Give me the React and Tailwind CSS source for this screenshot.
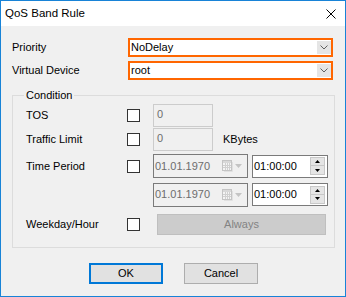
import React from "react";

function Chevron() {
  return (
    <svg width="8" height="5" viewBox="0 0 8 5" className="block">
      <path d="M0.5 0.5 L4 4 L7.5 0.5" fill="none" stroke="#606060" strokeWidth="1" />
    </svg>
  );
}

function Combo({ value }) {
  return (
    <div className="w-[205px] h-[19px] border-2 border-[#ff6600] bg-white flex items-center justify-between pl-[1px] pr-[0px]">
      <span className="leading-none">{value}</span>
      <div className="w-[14px] h-[13px] bg-[#e5e5e5] flex items-center justify-center">
        <Chevron />
      </div>
    </div>
  );
}

function Check() {
  return <div className="w-[13px] h-[13px] border border-[#333333] bg-white shrink-0" />;
}

function CalIcon() {
  return (
    <svg width="11" height="12" viewBox="0 0 11 12" className="block">
      <rect x="0.5" y="0.5" width="9" height="10" fill="#f4f4f4" stroke="#c4c4c4" />
      <rect x="1" y="1" width="8" height="2" fill="#d8d8d8" />
      <path d="M1 5.5 H9 M1 7.5 H9 M3.5 3 V10 M5.5 3 V10 M7.5 3 V10" stroke="#d0d0d0" strokeWidth="1" />
      <path d="M10.5 2 V11.5 H2" fill="none" stroke="#e0e0e0" />
    </svg>
  );
}

function DateBox() {
  return (
    <div className="w-[95px] h-[24px] border border-[#7a7a7a] bg-[#f0f0f0] flex items-center pl-[1px] pr-[5px] shrink-0">
      <span className="text-[#6d6d6d] leading-none">01.01.1970</span>
      <div className="ml-auto flex items-center gap-[2px]">
        <CalIcon />
        <svg width="7" height="4" viewBox="0 0 7 4" className="block">
          <path d="M0 0 H7 L3.5 4 Z" fill="#c4c4c4" />
        </svg>
      </div>
    </div>
  );
}

function Spin() {
  return (
    <div className="flex flex-col w-[15px]">
      <div className="h-[9px] bg-[#e5e5e5] border border-[#c8c8c8] flex items-center justify-center">
        <svg width="5" height="3" viewBox="0 0 5 3" className="block">
          <path d="M0 3 L2.5 0 L5 3 Z" fill="#000" />
        </svg>
      </div>
      <div className="h-[9px] bg-[#e5e5e5] border border-t-0 border-[#c8c8c8] flex items-center justify-center">
        <svg width="5" height="3" viewBox="0 0 5 3" className="block">
          <path d="M0 0 L5 0 L2.5 3 Z" fill="#000" />
        </svg>
      </div>
    </div>
  );
}

function TimeBox() {
  return (
    <div className="ml-[4px] w-[76px] h-[23px] border border-[#7a7a7a] bg-white flex items-center pl-[1px] pr-[2px] shrink-0">
      <span className="leading-none">01:00:00</span>
      <div className="ml-auto">
        <Spin />
      </div>
    </div>
  );
}

function DisabledInput() {
  return (
    <div className="w-[60px] h-[23px] border border-[#cccccc] bg-[#f0f0f0] pl-[3px] pt-[3px] shrink-0">
      <span className="text-[#6d6d6d] leading-[13px] block">0</span>
    </div>
  );
}

export default function App() {
  return (
    <div className="w-[346px] h-[297px] border border-[#1883d7] bg-[#f0f0f0] flex flex-col font-['Liberation_Sans',Arial,sans-serif] text-[11px] text-black overflow-hidden">
      <div className="h-[25px] bg-white flex items-center justify-between pl-[4px] pr-[9px] shrink-0">
        <span className="text-[11.5px] leading-none">QoS Band Rule</span>
        <svg width="10" height="10" viewBox="0 0 10 10" className="block">
          <path d="M0.5 0.5 L9.5 9.5 M9.5 0.5 L0.5 9.5" stroke="#000" strokeWidth="1" />
        </svg>
      </div>

      <div className="flex flex-col pl-[11px] pr-[10px] pt-[12px]">
        <div className="flex items-center h-[19px]">
          <span className="w-[116px]">Priority</span>
          <Combo value="NoDelay" />
        </div>
        <div className="flex items-center h-[19px] mt-[4px]">
          <span className="w-[116px]">Virtual Device</span>
          <Combo value="root" />
        </div>

        <div className="relative mt-[15px] w-[323px] h-[153px] border border-[#dcdcdc] pl-[13px] flex flex-col">
          <span className="absolute left-[11px] -top-[8px] px-[2px] bg-[#f0f0f0] leading-[14px]">Condition</span>

          <div className="flex items-center h-[23px] mt-[8px]">
            <span className="w-[101px]">TOS</span>
            <Check />
            <div className="ml-[13px]">
              <DisabledInput />
            </div>
          </div>

          <div className="flex items-center h-[23px] mt-[1px]">
            <span className="w-[101px]">Traffic Limit</span>
            <Check />
            <div className="ml-[13px]">
              <DisabledInput />
            </div>
            <span className="ml-[10px]">KBytes</span>
          </div>

          <div className="flex items-center h-[24px] mt-[3px]">
            <span className="w-[101px]">Time Period</span>
            <Check />
            <div className="ml-[13px]">
              <DateBox />
            </div>
            <TimeBox />
          </div>

          <div className="flex items-center h-[25px] mt-[4px]">
            <div className="w-[127px] shrink-0" />
            <DateBox />
            <TimeBox />
          </div>

          <div className="flex items-center h-[21px] mt-[7px]">
            <span className="w-[101px]">Weekday/Hour</span>
            <Check />
            <div className="ml-[17px] w-[169px] h-[21px] bg-[#cccccc] border border-[#bfbfbf] flex items-center justify-center text-[#838383]">
              Always
            </div>
          </div>
        </div>

        <div className="mt-[15px] flex justify-center gap-[21px]">
          <div className="w-[74px] h-[21px] border-2 border-[#0078d7] bg-[#e1e1e1] flex items-center justify-center">
            OK
          </div>
          <div className="w-[74px] h-[21px] border border-[#adadad] bg-[#e1e1e1] flex items-center justify-center">
            Cancel
          </div>
        </div>
      </div>
    </div>
  );
}
